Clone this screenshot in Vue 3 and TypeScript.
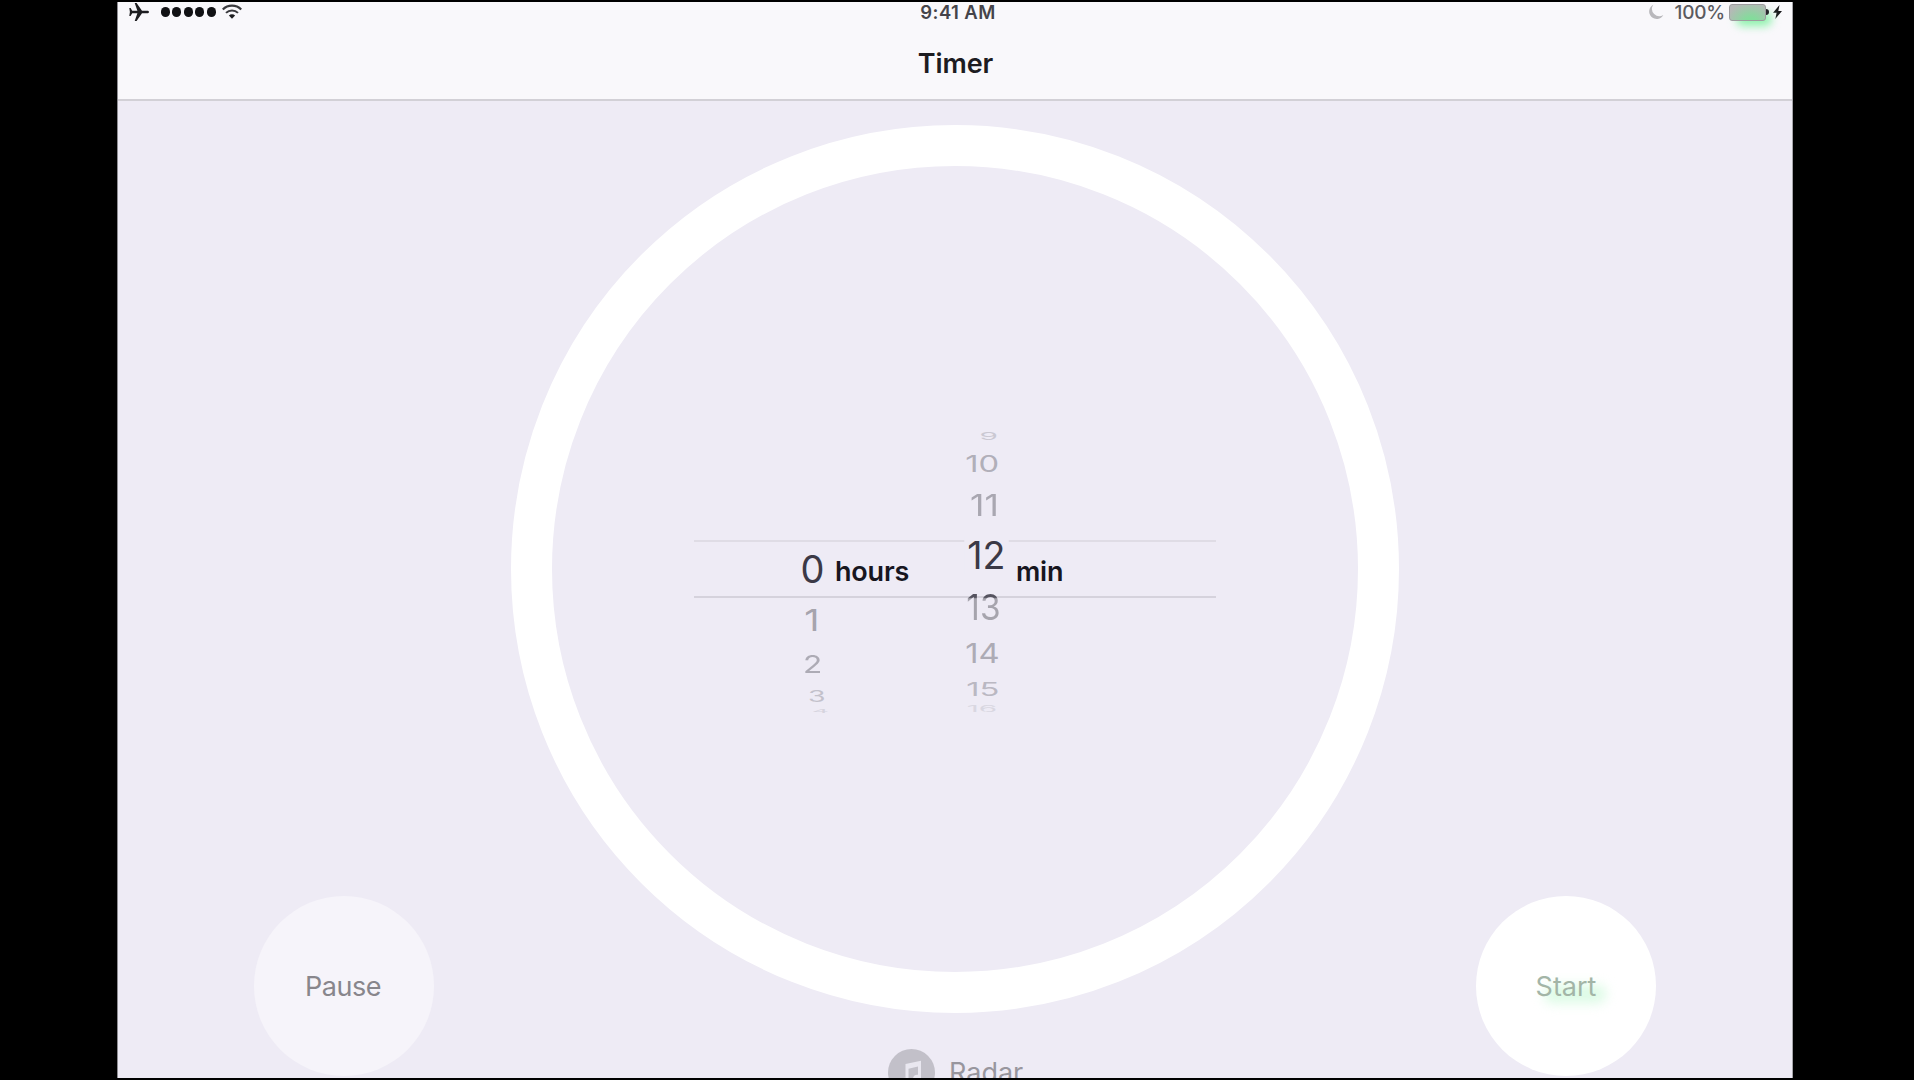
<script setup lang="ts">
interface WheelRow {
  label: string
  height: number
  sx: number
  sy: number
  dx: number
  color: string
  kind?: string
}

const hours: WheelRow[] = [
  { label: '0', height: 50, sx: 1, sy: 1, dx: -0.5, color: '#3b3946' },
  { label: '1', height: 52, sx: 0.98, sy: 0.8, dx: -1, color: '#a6a4ad' },
  { label: '2', height: 37, sx: 0.83, sy: 0.65, dx: 0, color: '#adabb5' },
  { label: '3', height: 26, sx: 0.75, sy: 0.4, dx: 4, color: '#c3c1cb' },
  { label: '4', height: 4, sx: 0.7, sy: 0.13, dx: 7, color: '#d6d4de' },
]

const minutes: WheelRow[] = [
  { label: '9', height: 24, sx: 0.78, sy: 0.28, dx: 5, color: '#cac8d2' },
  { label: '10', height: 33, sx: 0.86, sy: 0.6, dx: -1.5, color: '#b1afb9' },
  { label: '11', height: 49, sx: 0.93, sy: 0.79, dx: 0, color: '#a9a7b1' },
  { label: '12', height: 50, sx: 0.99, sy: 1, dx: 2, color: '#3b3946', kind: 'raised' },
  { label: '13', height: 54, sx: 0.88, sy: 0.94, dx: -1, color: '#a6a4ad', kind: 'crossing' },
  { label: '14', height: 38, sx: 0.86, sy: 0.72, dx: -1.5, color: '#adabb5' },
  { label: '15', height: 34, sx: 0.86, sy: 0.5, dx: -1.5, color: '#bab8c2' },
  { label: '16', height: 6, sx: 0.78, sy: 0.22, dx: -1.5, color: '#d9d7e1' },
]

const rowStyle = (row: WheelRow) => ({ height: `${row.height}px` })
const digitStyle = (row: WheelRow) => ({
  color: row.color,
  transform: `translateX(${row.dx}px) scale(${row.sx}, ${row.sy})`,
})
</script>

<template>
  <div class="stage">
    <div class="screen">
      <header class="nav">
        <div class="status">
          <div class="status-left">
            <svg class="plane" width="20" height="18" viewBox="0 0 20 18">
              <path d="M20 9c0-.9-.8-1.300-2-1.300h-5L7.600 0H5.700l2.700 7.700H3.200L1.600 5H.3l.6 4-.6 4h1.300l1.600-2.700h5.200L5.700 18h1.900L13 10.300h5c1.200 0 2-.4 2-1.300z" fill="#1d1d20" />
            </svg>
            <div class="dots"><i v-for="n in 5" :key="n" /></div>
            <svg class="wifi" width="20" height="15" viewBox="0 0 20 15" fill="none" stroke="#3a3a3e">
              <path d="M.8 5.500a13 13 0 0 1 18.400 0" stroke-width="2.300" />
              <path d="M4 8.900a8.500 8.500 0 0 1 12 0" stroke-width="2" />
              <path d="M6.900 11.600a4.400 4.400 0 0 1 6.200 0L10 14.700z" fill="#1d1d20" stroke="none" />
            </svg>
          </div>
          <span class="clock">9:41 AM</span>
          <div class="status-right">
            <svg class="moon" width="16" height="16" viewBox="0 0 16 16">
              <path d="M5.300.8a7.500 7.500 0 1 0 10 10.200A7.300 7.300 0 0 1 5.300.8z" fill="#b9b8bc" />
            </svg>
            <span class="percent">100%</span>
            <div class="battery"><span class="glow" /><span class="cell" /><span class="cap" /></div>
            <svg class="bolt" width="9" height="14" viewBox="0 0 9 14">
              <path d="M6.500 0 0 7.700h3.600L2.300 14 9 5.900H5.300z" fill="#18181b" />
            </svg>
          </div>
        </div>
        <h1>Timer</h1>
      </header>

      <main>
        <button class="round pause"><span>Pause</span></button>
        <div class="center">
          <div class="dial">
            <div class="picker">
              <div class="band" />
              <div class="wheel hours">
                <div v-for="row in hours" :key="row.label" class="row" :style="rowStyle(row)">
                  <span class="digit" :style="digitStyle(row)">{{ row.label }}</span>
                </div>
              </div>
              <span class="unit">hours</span>
              <div class="wheel">
                <div v-for="row in minutes" :key="row.label" class="row" :class="row.kind" :style="rowStyle(row)">
                  <span class="digit" :style="digitStyle(row)">{{ row.label }}</span>
                </div>
              </div>
              <span class="unit min">min</span>
            </div>
          </div>
          <div class="sound">
            <svg width="47" height="47" viewBox="0 0 47 47">
              <circle cx="23.500" cy="23.500" r="23.500" fill="#c2c0c9" />
              <path d="M17.500 15 33 11.800v17.700a4 4 0 1 1-3-3.700v-8.300L20.500 19.700v13a4 4 0 1 1-3-3.700z" fill="#e9e7f0" />
            </svg>
            <span>Radar</span>
          </div>
        </div>
        <button class="round start"><span>Start</span></button>
      </main>
    </div>
  </div>
</template>

<style>
body {
  margin: 0;
  background: #000;
}
</style>

<style scoped>
.stage {
  box-sizing: border-box;
  width: 1914px;
  height: 1080px;
  padding: 2px 121px 2px 117px;
  background: #000;
  overflow: hidden;
  font-family: Inter, "Liberation Sans", sans-serif;
}
.screen {
  box-sizing: border-box;
  width: 1676px;
  height: 1076px;
  border-left: 1px solid #8d8c92;
  border-right: 1px solid #a5a4a9;
  background: #eeebf5;
  overflow: hidden;
}
.nav {
  box-sizing: border-box;
  height: 99px;
  background: #f9f8fb;
  border-bottom: 2px solid #d2d0d6;
}
.status {
  display: grid;
  grid-template-columns: 1fr auto 1fr;
  align-items: center;
  height: 20px;
  padding: 0 10px 0 11px;
}
.status-left,
.status-right {
  display: flex;
  align-items: center;
  height: 20px;
}
.status-right {
  justify-content: flex-end;
}
.plane {
  margin-top: -1px;
}
.dots {
  display: flex;
  gap: 2.300px;
  margin: 0 6px 0 12px;
}
.dots i {
  width: 9.100px;
  height: 9.100px;
  border-radius: 50%;
  background: #111114;
}
.wifi {
  margin-top: -2px;
}
.clock {
  font-size: 18.500px;
  line-height: 20px;
  font-weight: 600;
  color: #45444a;
  letter-spacing: 0.400px;
  margin-left: 5px;
}
.percent {
  margin: 2px 4px 0 11px;
  font-size: 19px;
  line-height: 20px;
  font-weight: 500;
  letter-spacing: -0.200px;
  color: #5b5a5f;
}
.battery {
  position: relative;
  display: flex;
  align-items: center;
  width: 40px;
  margin-right: 4px;
}
.glow {
  position: absolute;
  left: 7px;
  top: 8px;
  width: 36px;
  height: 14px;
  border-radius: 8px;
  background: #8df2ab;
  filter: blur(4px);
}
.cell {
  position: relative;
  box-sizing: border-box;
  width: 37px;
  height: 17px;
  border: 1.500px solid #9d9c9f;
  border-radius: 3px;
  background: radial-gradient(ellipse at 60% 120%, #83dc9b 20%, #b6b8b7 85%);
}
.cap {
  position: relative;
  width: 3px;
  height: 6px;
  border-radius: 0 3px 3px 0;
  background: #26262a;
}
h1 {
  margin: 24px 0 0 1px;
  text-align: center;
  font-size: 27px;
  line-height: 36px;
  font-weight: 600;
  letter-spacing: -0.100px;
  color: #1d1c21;
}
main {
  display: grid;
  grid-template-columns: 180px 888px 180px;
  column-gap: 77px;
  height: 951px;
  margin: 24px 0 0 136px;
}
.round {
  align-self: end;
  width: 180px;
  height: 180px;
  padding: 0;
  border: 0;
  border-radius: 50%;
  font: 400 27px/32px Inter, "Liberation Sans", sans-serif;
  letter-spacing: -0.500px;
}
.round span {
  top: 1px;
  left: -1px;
  position: relative;
}
.pause {
  background: #f6f4fa;
  color: #88868c;
}
.start {
  background: #fff;
  color: #a3b5a7;
}
.start span {
  left: 0;
  z-index: 0;
  letter-spacing: 0;
}
.start span::before {
  content: "";
  position: absolute;
  z-index: -1;
  left: 8px;
  top: 15px;
  width: 62px;
  height: 18px;
  border-radius: 8px;
  background: #dcfbe5;
  filter: blur(6px);
}
.center {
  height: 951px;
}
.dial {
  box-sizing: border-box;
  display: flex;
  align-items: center;
  justify-content: center;
  width: 888px;
  height: 888px;
  border: 41px solid #fff;
  border-radius: 50%;
}
.picker {
  position: relative;
  box-sizing: border-box;
  display: grid;
  grid-template-columns: 40px 122px 58px auto;
  width: 522px;
  height: 289px;
  margin-bottom: 2px;
  padding-left: 99px;
}
.band {
  position: absolute;
  left: 0;
  right: 0;
  top: 116px;
  height: 54px;
  border-top: 2px solid #dfdce5;
  border-bottom: 2px solid #d5d2dc;
}
.wheel {
  position: relative;
}
.hours {
  padding-top: 120px;
}
.row {
  display: flex;
  align-items: center;
  justify-content: center;
}
.digit {
  flex: none;
  font-size: 38px;
  line-height: 38px;
  font-weight: 400;
}
.raised .digit {
  background: #eeebf5;
  padding: 0 3px;
}
.crossing .digit {
  background: linear-gradient(#55535f 23%, #a6a4ad 27%);
  background-clip: text;
  -webkit-text-fill-color: transparent;
}
.unit {
  align-self: center;
  padding: 8px 0 0 2px;
  font-size: 27px;
  line-height: 32px;
  font-weight: 600;
  letter-spacing: -0.200px;
  color: #17161f;
}
.min {
  padding-left: 3px;
}
.sound {
  display: flex;
  align-items: center;
  gap: 14px;
  margin: 36px 0 0 377px;
  font-size: 27px;
  line-height: 32px;
  color: #98969e;
}
.sound span {
  padding-top: 1px;
}
</style>
